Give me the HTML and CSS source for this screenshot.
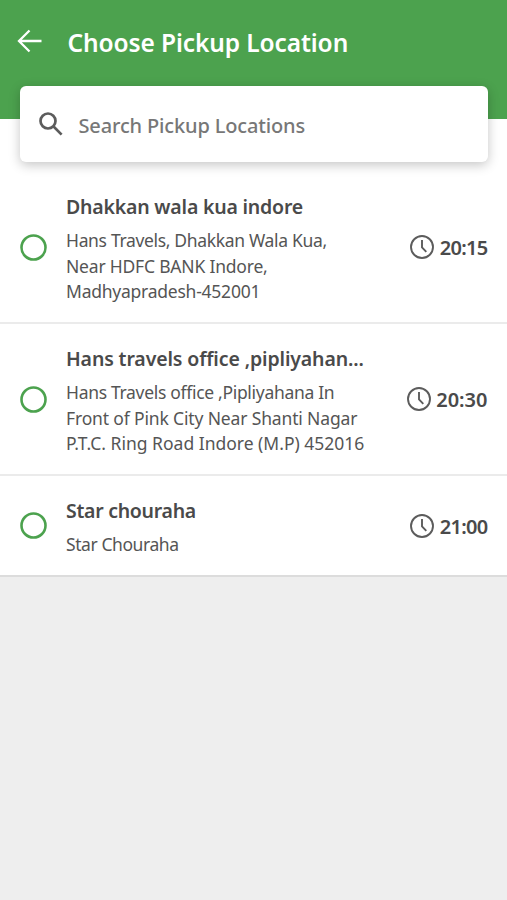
FILE: index.html
```html
<!DOCTYPE html>
<html lang="en">
<head>
<meta charset="utf-8">
<title>Choose Pickup Location</title>
<link rel="stylesheet" href="styles.css">
</head>
<body>
<header class="header">
  <svg class="back" viewBox="0 0 26 24" width="26" height="24"><path d="M24.500 12H2M12.500 1.500L2 12L12.500 22.500"/></svg>
  <h1 class="heading">Choose Pickup Location</h1>
</header>
<main class="list">
  <div class="search">
    <svg class="search-icon" viewBox="0 0 24 24" width="24" height="24"><circle cx="9" cy="9" r="7.500"/><path d="M14.300 14.300L22.600 22.600"/></svg>
    <span>Search Pickup Locations</span>
  </div>
  <section class="row">
    <svg class="radio" viewBox="0 0 27 27" width="27" height="27"><circle cx="13.500" cy="13.500" r="12"/></svg>
    <div class="place">
      <h2 class="name n1">Dhakkan wala kua indore</h2>
      <p class="address"><span class="a1">Hans Travels, Dhakkan Wala Kua,</span><br><span class="a2">Near HDFC BANK Indore,</span><br><span class="a3">Madhyapradesh-452001</span></p>
    </div>
    <div class="time tight"><svg class="clock" viewBox="0 0 24 24" width="24" height="24"><circle cx="12" cy="12" r="11"/><path d="M12 5V12.300L16.300 16.800"/></svg><span>20:15</span></div>
  </section>
  <section class="row">
    <svg class="radio" viewBox="0 0 27 27" width="27" height="27"><circle cx="13.500" cy="13.500" r="12"/></svg>
    <div class="place">
      <h2 class="name n2">Hans travels office ,pipliyahan...</h2>
      <p class="address"><span class="a4">Hans Travels office ,Pipliyahana In</span><br><span class="a5">Front of Pink City Near Shanti Nagar</span><br><span class="a6">P.T.C. Ring Road Indore (M.P) 452016</span></p>
    </div>
    <div class="time"><svg class="clock" viewBox="0 0 24 24" width="24" height="24"><circle cx="12" cy="12" r="11"/><path d="M12 5V12.300L16.300 16.800"/></svg><span>20:30</span></div>
  </section>
  <section class="row last">
    <svg class="radio" viewBox="0 0 27 27" width="27" height="27"><circle cx="13.500" cy="13.500" r="12"/></svg>
    <div class="place">
      <h2 class="name n3">Star chouraha</h2>
      <p class="address"><span class="a7">Star Chouraha</span></p>
    </div>
    <div class="time tight"><svg class="clock" viewBox="0 0 24 24" width="24" height="24"><circle cx="12" cy="12" r="11"/><path d="M12 5V12.300L16.300 16.800"/></svg><span>21:00</span></div>
  </section>
</main>
</body>
</html>
```
FILE: styles.css
```css
* { box-sizing: border-box; }
body { margin: 0; min-height: 900px; background: #eee; font-family: "Noto Sans", "Open Sans", sans-serif; color: #4a4a4a; }
svg { fill: none; flex: none; }
h1, h2, p { margin: 0; white-space: nowrap; }
.header { display: flex; align-items: flex-start; height: 119px; padding: 29px 0 0 17px; background: #4ca24e; }
.back { stroke: #fff; stroke-width: 2.300; }
.heading { margin-left: 24.500px; color: #fff; font-size: 24.500px; font-weight: 600; line-height: 28px; letter-spacing: -.11px; }
.list { background: #fff; height: 458px; border-bottom: 2px solid #dcdcdc; }
.search { position: relative; top: -33px; display: flex; align-items: center; gap: 15.500px; width: 468px; height: 76px; margin: 0 0 -33px 20px; padding-left: 19px; border-radius: 6px; background: #fff; box-shadow: 0 3px 12px rgba(0,0,0,.23); color: #777; font-size: 20px; font-weight: 500; letter-spacing: -.15px; white-space: nowrap; }
.search span { padding-top: 2px; }
.search-icon { stroke: #5c5c5c; stroke-width: 2.700; }
.row { display: flex; align-items: center; height: 162px; padding: 0 19.500px 0 20px; border-bottom: 2px solid #ebebeb; }
.row:nth-of-type(1) { padding-top: 10px; }
.row:nth-of-type(2) { height: 152px; }
.row.last { height: 99px; border: 0; }
.radio { stroke: #4ca24e; stroke-width: 2.600; }
.place { flex: 1; min-width: 0; margin-left: 19px; padding-top: 4px; }
.name { font-size: 19.500px; font-weight: 600; line-height: 28px; margin-bottom: 7px; }
.address { color: #555; font-size: 17.500px; line-height: 25.500px; }
.time { display: flex; align-items: center; gap: 5.500px; font-size: 20px; font-weight: 600; line-height: 28px; }
.time span { padding-top: 2px; }
.tight { letter-spacing: -.7px; }
.clock { stroke: #5c5c5c; stroke-width: 1.900; }
.n1 { letter-spacing: -.2px; }
.n2 { letter-spacing: -.13px; }
.n3 { letter-spacing: -.28px; }
.a1 { letter-spacing: -.33px; }
.a2 { letter-spacing: -.2px; }
.a3 { letter-spacing: -.24px; }
.a4 { letter-spacing: -.31px; }
.a5 { letter-spacing: -.15px; }
.a7 { letter-spacing: -.42px; }
```
